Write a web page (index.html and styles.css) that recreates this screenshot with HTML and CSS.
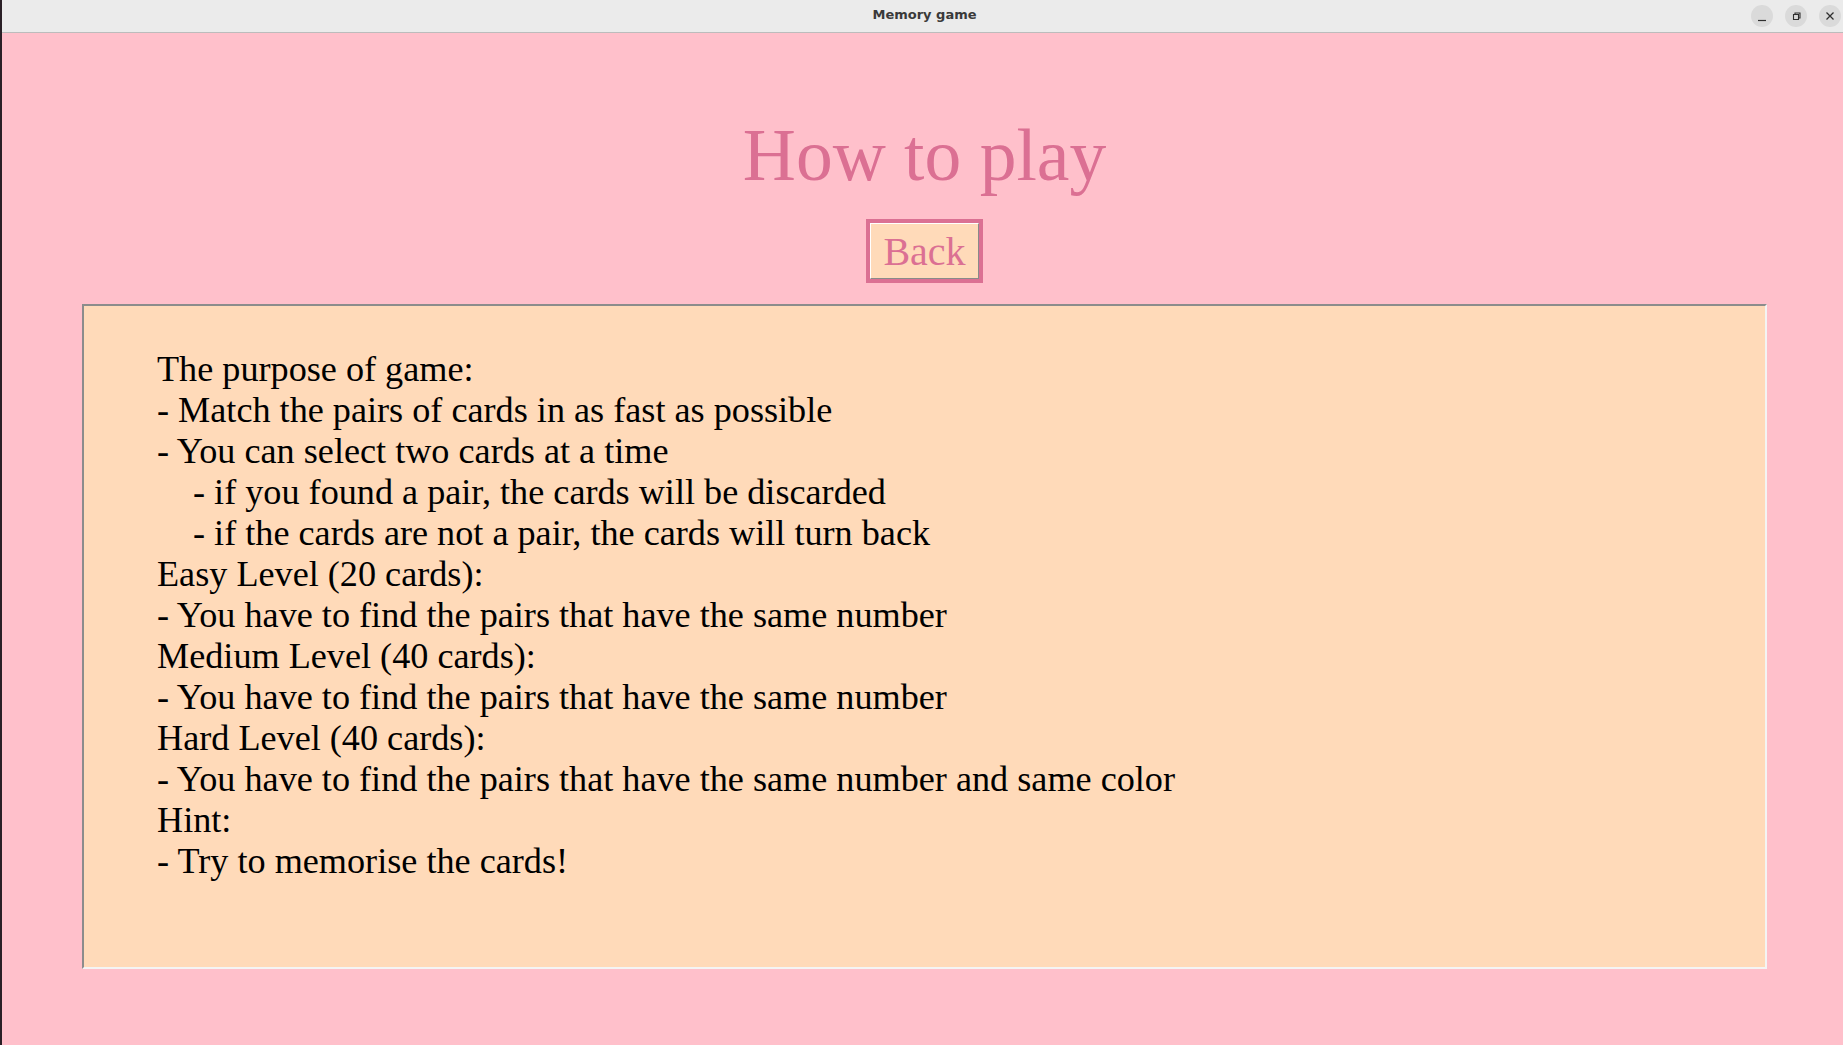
FILE: index.html
```html
<!DOCTYPE html>
<html lang="en">
<head>
<meta charset="utf-8">
<title>Memory game</title>
<link rel="stylesheet" href="styles.css">
</head>
<body>
<div class="desktop">
  <div class="edge"></div>
  <div class="window">
    <header class="titlebar">
      <div class="tb-spacer"></div>
      <div class="tb-title">Memory game</div>
      <div class="tb-controls">
        <span class="tb-btn">
          <svg width="22" height="22" viewBox="0 0 22 22"><path d="M7 15.5h8" stroke="#2f2f2f" stroke-width="1.2" fill="none"/></svg>
        </span>
        <span class="tb-btn">
          <svg width="22" height="22" viewBox="0 0 22 22"><path d="M8.5 9.5h5v5h-5z M10 9.5V8h5v5h-1.5" stroke="#2f2f2f" stroke-width="1.1" fill="none"/></svg>
        </span>
        <span class="tb-btn">
          <svg width="22" height="22" viewBox="0 0 22 22"><path d="M7.5 7.5l7 7M14.5 7.5l-7 7" stroke="#2f2f2f" stroke-width="1.3" fill="none"/></svg>
        </span>
      </div>
    </header>
    <main class="content">
      <h1 class="heading">How to play</h1>
      <div class="back-btn"><div class="back-inner">Back</div></div>
      <section class="panel">
        <p class="line">The purpose of game:</p>
        <p class="line">- Match the pairs of cards in as fast as possible</p>
        <p class="line">- You can select two cards at a time</p>
        <p class="line indent">- if you found a pair, the cards will be discarded</p>
        <p class="line indent">- if the cards are not a pair, the cards will turn back</p>
        <p class="line">Easy Level (20 cards):</p>
        <p class="line">- You have to find the pairs that have the same number</p>
        <p class="line">Medium Level (40 cards):</p>
        <p class="line">- You have to find the pairs that have the same number</p>
        <p class="line">Hard Level (40 cards):</p>
        <p class="line">- You have to find the pairs that have the same number and same color</p>
        <p class="line">Hint:</p>
        <p class="line">- Try to memorise the cards!</p>
      </section>
    </main>
  </div>
</div>
</body>
</html>
```
FILE: styles.css
```css
html, body {
  margin: 0;
  padding: 0;
  width: 1843px;
  height: 1045px;
  overflow: hidden;
}
.desktop {
  display: flex;
  width: 1843px;
  height: 1045px;
}
.edge {
  width: 2px;
  flex: none;
  background: #2a1f26;
}
.window {
  flex: 1;
  display: flex;
  flex-direction: column;
  min-width: 0;
}
.titlebar {
  height: 32px;
  flex: none;
  background: #ebebeb;
  border-bottom: 1px solid #bcbcbc;
  display: grid;
  grid-template-columns: 1fr auto 1fr;
  align-items: center;
  padding-left: 4px;
}
.tb-title {
  font-family: "DejaVu Sans", sans-serif;
  font-weight: bold;
  font-size: 13px;
  color: #3a3a3a;
  padding-bottom: 3px;
}
.tb-controls {
  display: flex;
  justify-content: flex-end;
  gap: 12px;
  padding-right: 2px;
}
.tb-btn {
  width: 22px;
  height: 22px;
  border-radius: 50%;
  background: #dadada;
  display: flex;
}
.content {
  flex: 1;
  background: #ffc0cb;
  display: flex;
  flex-direction: column;
  align-items: center;
  padding-left: 4px;
}
.heading {
  margin: 83px 0 0 0;
  font-family: "Liberation Serif", "Times New Roman", serif;
  font-weight: normal;
  font-size: 73.5px;
  line-height: 80px;
  color: #db7093;
}
.back-btn {
  margin-top: 23px;
  width: 109px;
  height: 56px;
  border: 4px solid #db7093;
}
.back-inner {
  box-sizing: border-box;
  width: 109px;
  height: 56px;
  background: #ffdab9;
  border: 1px solid;
  border-color: #ffffff #8a8a8a #8a8a8a #ffffff;
  padding-top: 2px;
  font-family: "Liberation Serif", "Times New Roman", serif;
  font-size: 40px;
  line-height: 52px;
  color: #db7093;
  text-align: center;
}
.panel {
  margin-top: 21px;
  box-sizing: border-box;
  width: 1685px;
  height: 665px;
  background: #ffdab9;
  border: 2px solid;
  border-color: #8c8c8c #f4f4f4 #f4f4f4 #8c8c8c;
  padding: 43px 0 0 73px;
}
.line {
  margin: 0;
  font-family: "Liberation Serif", "Times New Roman", serif;
  font-size: 36.2px;
  line-height: 41px;
  color: #000;
  white-space: nowrap;
}
.indent {
  padding-left: 36px;
}
```
